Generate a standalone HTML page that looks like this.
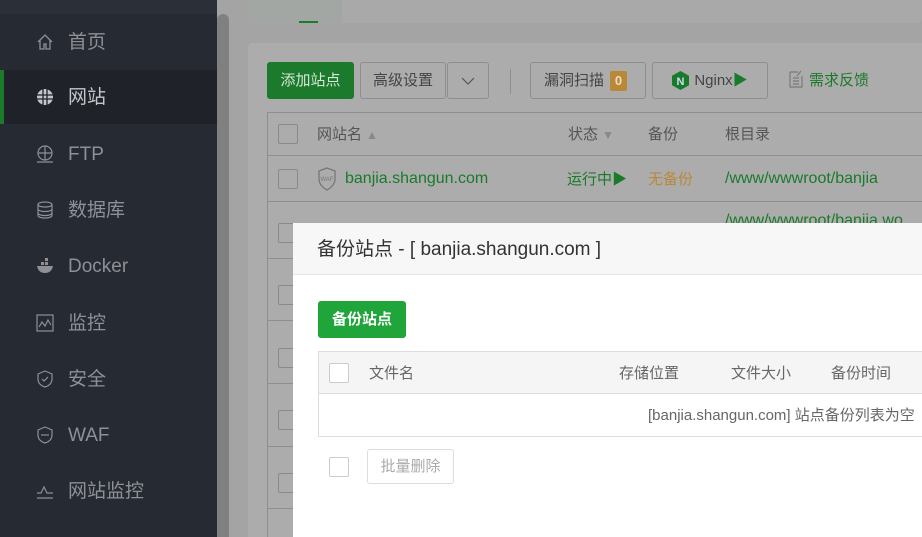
<!DOCTYPE html>
<html style="overflow:hidden;width:922px;height:537px"><head><meta charset="utf-8"><style>
*{box-sizing:border-box;margin:0;padding:0;line-height:20px}
body{width:922px;height:537px;overflow:hidden;position:relative;background:#a4a4a4;font-family:"Liberation Sans","Noto Sans CJK SC",sans-serif}
.abs{position:absolute}
#side{left:0;top:0;width:217px;height:537px;background:#262a33}
#side .top{position:absolute;left:0;top:0;width:217px;height:14px;background:#2b2f38}
.item{position:absolute;left:0;width:217px;height:54px;color:#8e9095;font-size:19px}
.item .ic{position:absolute;left:36px;top:18px;width:18px;height:18px}
.item span{position:absolute;left:68px;top:17px;line-height:22px;height:22px}
.item.act{background:#1f2228;color:#c4c6c9}
.item.act:before{content:"";position:absolute;left:0;top:0;width:4px;height:54px;background:#1c7a2b}
#scroll{left:217px;top:14px;width:12px;height:523px;background:#808080;border-radius:6px 6px 0 0}
#tabs{left:248px;top:0;width:674px;height:23px;background:#a9a9a9;border-radius:0 0 4px 4px}
#card{left:248px;top:43px;width:674px;height:494px;background:#acacac;border-radius:4px 0 0 0;overflow:hidden}
.btn{position:absolute;height:37px;border:1px solid #8e8e8e;border-radius:3px;font-size:15px;color:#444;display:flex;align-items:center;justify-content:center;background:#acacac}
.cb{position:absolute;width:20px;height:20px;border:1px solid #8a8a8a;border-radius:2px}
.hline{position:absolute;height:1px;background:#8f8f8f}
.th{position:absolute;font-size:15px;color:#555}
#modal{left:293px;top:223px;width:629px;height:314px;background:#fff}
#mh{left:0;top:0;width:629px;height:52px;background:#f7f7f7;border-bottom:1px solid #e6e6e6;font-size:19px;color:#333;padding:17px 0 0 24px}
</style></head><body>
<div id="side" class="abs"><div class="top"></div>
<div class="item" style="top:15px"><svg class="ic" viewBox="0 0 18 18" fill="none" stroke="#8e9095" stroke-width="1.3"><path d="M2 9L9 2l7 7M4 7v9h4v-5h2v5h4V7"/></svg><span>首页</span></div>
<div class="item act" style="top:70px"><svg class="ic" viewBox="0 0 18 18" fill="#c4c6c9"><circle cx="9" cy="9" r="8"/><path d="M1 7h16M1 11h16M7 1v16M11 1v16" stroke="#1f2228" stroke-width="1.3"/></svg><span>网站</span></div>
<div class="item" style="top:127px"><svg class="ic" viewBox="0 0 18 18" fill="none" stroke="#8e9095" stroke-width="1.2"><circle cx="9" cy="8" r="7"/><path d="M2 8h14M9 1v14M1 17h16"/></svg><span>FTP</span></div>
<div class="item" style="top:183px"><svg class="ic" viewBox="0 0 18 18" fill="none" stroke="#8e9095" stroke-width="1.2"><ellipse cx="9" cy="3.5" rx="7" ry="2.5"/><path d="M2 3.5v11c0 1.4 3 2.5 7 2.5s7-1.1 7-2.5v-11M2 8c0 1.4 3 2.5 7 2.5S16 9.4 16 8M2 12c0 1.4 3 2.5 7 2.5s7-1.1 7-2.5"/></svg><span>数据库</span></div>
<div class="item" style="top:239px"><svg class="ic" viewBox="0 0 18 18" fill="#8e9095"><path d="M1 9h16c-1 5-4 7-8 7S2 14 1 9zM5 5h3v3H5zM9 5h3v3H9zM9 1h3v3H9z"/></svg><span>Docker</span></div>
<div class="item" style="top:296px"><svg class="ic" viewBox="0 0 18 18" fill="none" stroke="#8e9095" stroke-width="1.2"><rect x="1" y="1" width="16" height="16"/><path d="M3 13l3-5 3 4 3-6 3 5"/></svg><span>监控</span></div>
<div class="item" style="top:352px"><svg class="ic" viewBox="0 0 18 18" fill="none" stroke="#8e9095" stroke-width="1.2"><path d="M9 1l7 3v5c0 4-3 7-7 8-4-1-7-4-7-8V4z"/><path d="M6 9l2 2 4-4"/></svg><span>安全</span></div>
<div class="item" style="top:408px"><svg class="ic" viewBox="0 0 18 18" fill="none" stroke="#8e9095" stroke-width="1.2"><path d="M9 1l7 3v5c0 4-3 7-7 8-4-1-7-4-7-8V4z"/><path d="M5 9h8"/></svg><span>WAF</span></div>
<div class="item" style="top:464px"><svg class="ic" viewBox="0 0 18 18" fill="none" stroke="#8e9095" stroke-width="1.2"><path d="M1 11h4l3-6 3 6h6M1 16h16"/></svg><span>网站监控</span></div>
</div>
<div id="scroll" class="abs"></div>
<div id="tabs" class="abs"><div class="abs" style="left:0;top:0;width:94px;height:23px;background:#a3a7a3"></div><div class="abs" style="left:51px;top:21px;width:19px;height:2px;background:#1c7a2b"></div></div>
<div id="card" class="abs">
<div class="btn" style="left:19px;top:19px;width:87px;background:#1b7a2c;border-color:#1b7a2c;color:#d8e6d8">添加站点</div>
<div class="btn" style="left:112px;top:19px;width:86px">高级设置</div>
<div class="btn" style="left:199px;top:19px;width:42px"><svg width="14" height="8" viewBox="0 0 14 8" fill="none" stroke="#555" stroke-width="1.2"><path d="M1 1l6 6 6-6"/></svg></div>
<div class="abs" style="left:262px;top:26px;width:1px;height:25px;background:#8f8f8f"></div>
<div class="btn" style="left:282px;top:19px;width:116px;justify-content:flex-start;padding-left:13px">漏洞扫描<span style="margin-left:6px;background:#b98838;color:#e9dcc0;font-size:13px;font-weight:bold;width:17px;height:20px;border-radius:2px;display:inline-flex;align-items:center;justify-content:center">0</span></div>
<div class="btn" style="left:404px;top:19px;width:116px"><svg width="17" height="19" viewBox="0 0 17 19"><path d="M8.5 0L17 4.75v9.5L8.5 19 0 14.25v-9.5z" fill="#1a7a2b"/><text x="8.5" y="14" font-size="11" font-weight="bold" fill="#cde" text-anchor="middle" font-family="Liberation Sans">N</text></svg><span style="margin-left:5px">Nginx</span><span style="color:#1a7a2b">▶</span></div>
<svg class="abs" style="left:541px;top:27px" width="14" height="18" viewBox="0 0 14 18" fill="none" stroke="#7a7a7a" stroke-width="1.2"><path d="M1 2h8M1 2v15h12V6M4 8h6M4 11h6M4 14h6"/><path d="M12 1l-4 5" /></svg>
<div class="abs" style="left:561px;top:28px;font-size:15px;color:#1a7a2b">需求反馈</div>
<div class="abs" style="left:19px;top:69px;width:660px;height:430px;border-left:1px solid #8f8f8f;border-top:1px solid #8f8f8f"></div>
<div class="cb" style="left:30px;top:81px"></div>
<div class="th" style="left:69px;top:82px">网站名 <span style="color:#888;font-size:12px">▲</span></div>
<div class="th" style="left:320px;top:82px">状态 <span style="color:#888;font-size:12px">▼</span></div>
<div class="th" style="left:400px;top:82px">备份</div>
<div class="th" style="left:477px;top:82px">根目录</div>
<div class="hline" style="left:19px;top:112px;width:660px"></div>
<div class="cb" style="left:30px;top:126px"></div>
<svg class="abs" style="left:69px;top:124px" width="20" height="24" viewBox="0 0 20 24" fill="none" stroke="#777" stroke-width="1.3"><path d="M10 1l8 3v8c0 5-4 9-8 11-4-2-8-6-8-11V4z"/><text x="10" y="14" font-size="6" fill="#777" stroke="none" text-anchor="middle" font-family="Liberation Sans">WAF</text></svg>
<div class="abs" style="left:97px;top:126px;font-size:16px;color:#1a7a2b">banjia.shangun.com</div>
<div class="abs" style="left:319px;top:127px;font-size:15px;color:#1a7a2b">运行中▶</div>
<div class="abs" style="left:400px;top:127px;font-size:15px;color:#b98838">无备份</div>
<div class="abs" style="left:477px;top:126px;font-size:16px;color:#1a7a2b">/www/wwwroot/banjia</div>
<div class="abs" style="left:477px;top:168px;font-size:16px;color:#1a7a2b;white-space:nowrap">/www/wwwroot/banjia.wo</div>
<div class="hline" style="left:19px;top:158px;width:660px"></div>
<div class="hline" style="left:19px;top:215px;width:660px"></div>
<div class="hline" style="left:19px;top:277px;width:660px"></div>
<div class="hline" style="left:19px;top:340px;width:660px"></div>
<div class="hline" style="left:19px;top:403px;width:660px"></div>
<div class="hline" style="left:19px;top:465px;width:660px"></div>
<div class="cb" style="left:30px;top:180px"></div>
<div class="cb" style="left:30px;top:242px"></div>
<div class="cb" style="left:30px;top:305px"></div>
<div class="cb" style="left:30px;top:367px"></div>
<div class="cb" style="left:30px;top:430px"></div>
</div>
<div id="modal" class="abs">
<div id="mh" class="abs">备份站点 - [ banjia.shangun.com ]</div>
<div class="abs" style="left:25px;top:78px;width:88px;height:37px;background:#20a53a;border-radius:3px;color:#fff;font-size:15px;font-weight:bold;display:flex;align-items:center;justify-content:center">备份站点</div>
<div class="abs" style="left:25px;top:128px;width:610px;height:86px;border:1px solid #ddd"></div>
<div class="abs" style="left:26px;top:129px;width:610px;height:42px;background:#f5f5f5;border-bottom:1px solid #ddd"></div>
<div class="abs" style="left:36px;top:140px;width:20px;height:20px;border:1px solid #ccc;border-radius:2px;background:#fff"></div>
<div class="abs" style="left:76px;top:141px;font-size:15px;color:#666">文件名</div>
<div class="abs" style="left:326px;top:141px;font-size:15px;color:#666">存储位置</div>
<div class="abs" style="left:438px;top:141px;font-size:15px;color:#666">文件大小</div>
<div class="abs" style="left:538px;top:141px;font-size:15px;color:#666">备份时间</div>
<div class="abs" style="left:355px;top:183px;font-size:15px;color:#666;white-space:nowrap">[banjia.shangun.com] 站点备份列表为空</div>
<div class="abs" style="left:36px;top:234px;width:20px;height:20px;border:1px solid #ccc;border-radius:2px"></div>
<div class="abs" style="left:74px;top:226px;width:87px;height:35px;border:1px solid #ddd;border-radius:3px;color:#aaa;font-size:15px;display:flex;align-items:center;justify-content:center">批量删除</div>
</div>
</body></html>
